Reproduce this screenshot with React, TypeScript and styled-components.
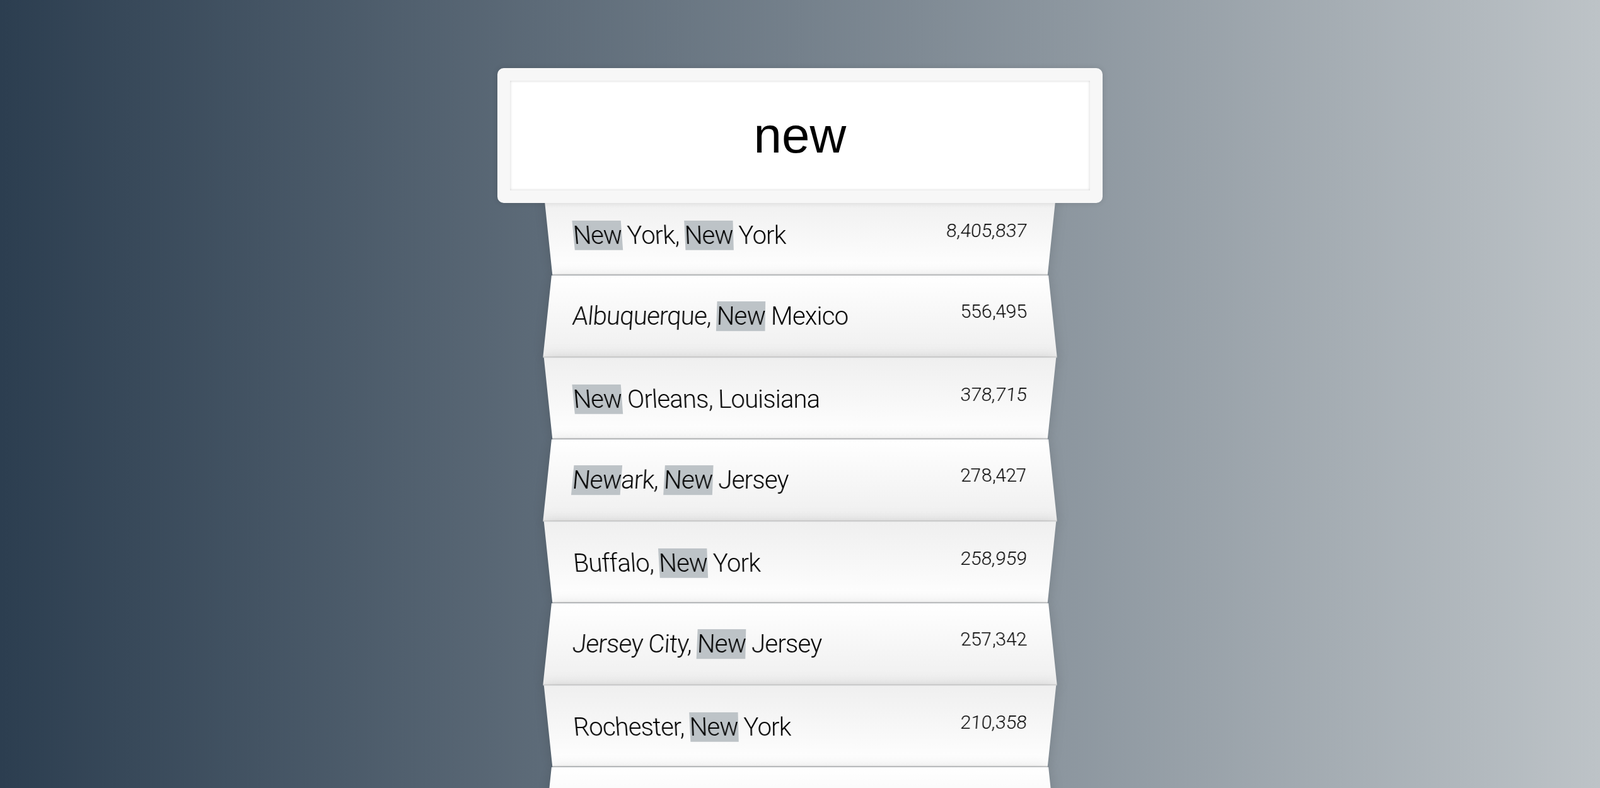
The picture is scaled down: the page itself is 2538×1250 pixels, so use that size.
import React, { useState } from 'react';
import styled, { createGlobalStyle } from 'styled-components';

const GlobalStyle = createGlobalStyle`
  html {
    box-sizing: border-box;
    background: linear-gradient(to right, #2c3e50, #bdc3c7);
    font-family: Roboto, 'Liberation Sans', sans-serif;
    font-size: 40px;
    font-weight: 300;
  }

  *, *:before, *:after {
    box-sizing: inherit;
  }

  body {
    margin: 0;
  }
`;

const SearchForm = styled.form`
  max-width: 800px;
  margin: 88px auto;
`;

const SearchInput = styled.input`
  display: block;
  margin: 0;
  width: 120%;
  height: 214px;
  padding: 40px;
  position: relative;
  left: -10%;
  top: 20px;
  z-index: 2;
  text-align: center;
  outline: 0;
  border: 20px solid #f7f7f7;
  border-radius: 10px;
  background: #fff;
  color: #000;
  font-family: 'Liberation Sans', Arial, sans-serif;
  font-size: 80px;
  font-weight: 400;
  box-shadow: 0 0 10px rgba(0, 0, 0, 0.12), inset 0 0 4px rgba(0, 0, 0, 0.19);
`;

const Suggestions = styled.ul`
  margin: 0;
  padding: 0;
  position: relative;
`;

const Suggestion = styled.li`
  list-style: none;
  margin: 0;
  padding: 42px 40px 38px;
  display: flex;
  justify-content: space-between;
  line-height: 48px;
  color: #000;
  text-transform: capitalize;
  border-bottom: 2px solid #d8d8d8;
  box-shadow: 0 0 20px rgba(0, 0, 0, 0.14);
  transition: background 0.2s;

  &:nth-child(even) {
    transform: perspective(200px) rotateX(3deg) translateY(4px) scale(1.001);
    background: linear-gradient(to bottom, #ffffff 0%, #efefef 100%);
  }

  &:nth-child(odd) {
    transform: perspective(200px) rotateX(-3deg) translateY(6px);
    background: linear-gradient(to top, #ffffff 0%, #efefef 100%);
  }
`;

const Name = styled.span`
  letter-spacing: -0.8px;
`;

const Population = styled.span`
  font-size: 30px;
  line-height: normal;
  margin-top: -2px;
`;

const Highlight = styled.span`
  background: #bdc3c7;
`;

type Place = {
  city: string;
  state: string;
  population: string;
};

const cities: Place[] = [
  { city: 'New York', state: 'New York', population: '8405837' },
  { city: 'Los Angeles', state: 'California', population: '3884307' },
  { city: 'Chicago', state: 'Illinois', population: '2718782' },
  { city: 'Houston', state: 'Texas', population: '2195914' },
  { city: 'Philadelphia', state: 'Pennsylvania', population: '1553165' },
  { city: 'Albuquerque', state: 'New Mexico', population: '556495' },
  { city: 'New Orleans', state: 'Louisiana', population: '378715' },
  { city: 'Newark', state: 'New Jersey', population: '278427' },
  { city: 'Buffalo', state: 'New York', population: '258959' },
  { city: 'Jersey City', state: 'New Jersey', population: '257342' },
  { city: 'Rochester', state: 'New York', population: '210358' },
  { city: 'Yonkers', state: 'New York', population: '199766' }
];

const numberWithCommas = (x: string) =>
  x.replace(/\B(?=(\d{3})+(?!\d))/g, ',');

const escapeRegex = (s: string) => s.replace(/[.*+?^${}()|[\]\\]/g, '\\$&');

const highlight = (text: string, query: string) => {
  if (!query) return text;
  const parts = text.split(new RegExp(`(${escapeRegex(query)})`, 'gi'));
  return parts.map((part, i) =>
    i % 2 === 1 ? <Highlight key={i}>{part}</Highlight> : part
  );
};

const App = () => {
  const [query, setQuery] = useState('new');

  const regex = new RegExp(escapeRegex(query), 'gi');
  const matches = query
    ? cities.filter(place => place.city.match(regex) || place.state.match(regex))
    : [];

  return (
    <>
      <GlobalStyle />
      <SearchForm onSubmit={e => e.preventDefault()}>
        <SearchInput
          type="text"
          placeholder="City or State"
          value={query}
          onChange={e => setQuery(e.target.value)}
        />
        <Suggestions>
          {matches.map(place => (
            <Suggestion key={place.city + place.state}>
              <Name>
                {highlight(place.city, query)}, {highlight(place.state, query)}
              </Name>
              <Population>{numberWithCommas(place.population)}</Population>
            </Suggestion>
          ))}
        </Suggestions>
      </SearchForm>
    </>
  );
};

export default App;
